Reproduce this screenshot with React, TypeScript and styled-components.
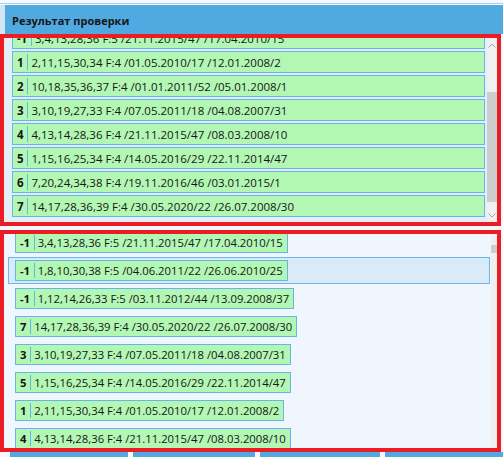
import React from 'react';
import styled, { createGlobalStyle } from 'styled-components';

const GlobalStyle = createGlobalStyle`
  html, body {
    margin: 0;
    padding: 0;
    background: #ffffff;
  }
  body {
    font-family: 'Open Sans', 'Noto Sans', 'Liberation Sans', sans-serif;
  }
`;

const palette = {
  blue: '#50a9e0',
  green: '#b3f7b4',
  border: '#68b3e8',
  red: '#ec1c24',
  text: '#161616',
  track: '#f0f0f0',
  thumb: '#cdcdcd',
  arrow: '#a3a3a3'
};

type Entry = { num: string; text: string };

const upperRows: Entry[] = [
  { num: '-1', text: '3,4,13,28,36 F:5 /21.11.2015/47 /17.04.2010/15' },
  { num: '1', text: '2,11,15,30,34 F:4 /01.05.2010/17 /12.01.2008/2' },
  { num: '2', text: '10,18,35,36,37 F:4 /01.01.2011/52 /05.01.2008/1' },
  { num: '3', text: '3,10,19,27,33 F:4 /07.05.2011/18 /04.08.2007/31' },
  { num: '4', text: '4,13,14,28,36 F:4 /21.11.2015/47 /08.03.2008/10' },
  { num: '5', text: '1,15,16,25,34 F:4 /14.05.2016/29 /22.11.2014/47' },
  { num: '6', text: '7,20,24,34,38 F:4 /19.11.2016/46 /03.01.2015/1' },
  { num: '7', text: '14,17,28,36,39 F:4 /30.05.2020/22 /26.07.2008/30' }
];

const lowerRows: Entry[] = [
  { num: '-1', text: '3,4,13,28,36 F:5 /21.11.2015/47 /17.04.2010/15' },
  { num: '-1', text: '1,8,10,30,38 F:5 /04.06.2011/22 /26.06.2010/25' },
  { num: '-1', text: '1,12,14,26,33 F:5 /03.11.2012/44 /13.09.2008/37' },
  { num: '7', text: '14,17,28,36,39 F:4 /30.05.2020/22 /26.07.2008/30' },
  { num: '3', text: '3,10,19,27,33 F:4 /07.05.2011/18 /04.08.2007/31' },
  { num: '5', text: '1,15,16,25,34 F:4 /14.05.2016/29 /22.11.2014/47' },
  { num: '1', text: '2,11,15,30,34 F:4 /01.05.2010/17 /12.01.2008/2' },
  { num: '4', text: '4,13,14,28,36 F:4 /21.11.2015/47 /08.03.2008/10' }
];

const tabs = [118, 122, 120, 118];

const Window = styled.div`
  width: 503px;
  height: 457px;
  display: flex;
  flex-direction: column;
  background: #f4f8fc;
  overflow: hidden;
`;

const TopStrip = styled.div`
  height: 1px;
  border-top: 3px solid #f7fafd;
  border-bottom: 1px solid #ffffff;
  background: #a8d0ee;
`;

const HeaderRow = styled.div`
  display: flex;
  height: 29px;
`;

const SideEdge = styled.div`
  width: 5px;
  background: #d3e5f5;
`;

const Header = styled.div`
  flex: 1;
  display: flex;
  align-items: center;
  padding: 2px 0 0 7px;
  background: ${palette.blue};
  color: ${palette.text};
  font-size: 11px;
  font-weight: 700;
`;

const Panel = styled.section<{ $height: number }>`
  box-sizing: border-box;
  width: 501px;
  height: ${(p) => p.$height}px;
  border: 4px solid ${palette.red};
  display: flex;
  overflow: hidden;
`;

const PanelGap = styled.div`
  height: 4px;
`;

const Viewport = styled.div<{ $bg: string; $padLeft: number; $padRight: number }>`
  flex: 1;
  overflow: hidden;
  background: ${(p) => p.$bg};
  padding: 0 ${(p) => p.$padRight}px 0 ${(p) => p.$padLeft}px;
`;

const RowList = styled.div<{ $offset: number }>`
  display: flex;
  flex-direction: column;
  margin-top: ${(p) => p.$offset}px;
`;

const Row = styled.div`
  box-sizing: border-box;
  height: 22px;
  margin-bottom: 2px;
  display: flex;
  align-items: center;
  padding-left: 4px;
  background: ${palette.green};
  border: 1px solid ${palette.border};
  font-size: 11.5px;
  color: ${palette.text};
  white-space: nowrap;
`;

const ItemSlot = styled.div<{ $selected?: boolean }>`
  box-sizing: border-box;
  height: 27px;
  margin-bottom: 1px;
  padding: 2px 0 2px 6px;
  display: flex;
  align-items: center;
  border: 1px solid ${(p) => (p.$selected ? '#6db6e8' : 'transparent')};
  background: ${(p) => (p.$selected ? '#d9ebf9' : 'transparent')};
`;

const Item = styled.div`
  box-sizing: border-box;
  height: 21px;
  display: flex;
  align-items: center;
  padding: 0 4px;
  background: ${palette.green};
  border: 1px solid ${palette.border};
  font-size: 11.3px;
  color: ${palette.text};
  white-space: nowrap;
`;

const Num = styled.span`
  font-weight: 700;
  letter-spacing: -0.2px;
`;

const Separator = styled.span`
  align-self: stretch;
  width: 1px;
  margin: 2px 3px 2px 4px;
  background: ${palette.border};
`;

const ScrollBar = styled.div<{ $width: number }>`
  width: ${(p) => p.$width}px;
  display: flex;
  flex-direction: column;
  align-items: center;
  background: ${palette.track};
`;

const ArrowBox = styled.div`
  height: 14px;
  display: flex;
  align-items: center;
  justify-content: center;
`;

const Track = styled.div`
  flex: 1;
  align-self: stretch;
  display: flex;
  flex-direction: column;
`;

const Thumb = styled.div<{ $top: number; $height: number }>`
  margin-top: ${(p) => p.$top}px;
  height: ${(p) => p.$height}px;
  background: ${palette.thumb};
`;

const BottomBar = styled.div`
  height: 5px;
  display: flex;
  gap: 5px;
  padding-left: 10px;
  background: #f4f8fc;
`;

const Tab = styled.div<{ $width: number }>`
  width: ${(p) => p.$width}px;
  background: ${palette.blue};
`;

const Chevron = ({ up }: { up?: boolean }) => (
  <svg width="8" height="5" viewBox="0 0 8 5">
    <path
      d={up ? 'M0.5 4.5 L4 1 L7.5 4.5' : 'M0.5 0.5 L4 4 L7.5 0.5'}
      fill="none"
      stroke={palette.arrow}
      strokeWidth="1"
    />
  </svg>
);

const App = () => {
  return (
    <>
      <GlobalStyle />
      <Window>
        <TopStrip />
        <HeaderRow>
          <SideEdge />
          <Header>Результат проверки</Header>
        </HeaderRow>

        <Panel $height={192}>
          <Viewport $bg="#e4eef8" $padLeft={8} $padRight={2}>
            <RowList $offset={-11}>
              {upperRows.map((row, idx) => (
                <Row key={idx}>
                  <Num>{row.num}</Num>
                  <Separator />
                  {row.text}
                </Row>
              ))}
            </RowList>
          </Viewport>
          <ScrollBar $width={10}>
            <ArrowBox>
              <Chevron up />
            </ArrowBox>
            <Track>
              <Thumb $top={40} $height={110} />
            </Track>
            <ArrowBox>
              <Chevron />
            </ArrowBox>
          </ScrollBar>
        </Panel>

        <PanelGap />

        <Panel $height={222}>
          <Viewport $bg="#eff6fe" $padLeft={4} $padRight={1}>
            <RowList $offset={-5}>
              {lowerRows.map((row, idx) => (
                <ItemSlot key={idx} $selected={idx === 1}>
                  <Item>
                    <Num>{row.num}</Num>
                    <Separator />
                    {row.text}
                  </Item>
                </ItemSlot>
              ))}
            </RowList>
          </Viewport>
          <ScrollBar $width={6}>
            <Track>
              <Thumb $top={11} $height={8} />
            </Track>
          </ScrollBar>
        </Panel>

        <BottomBar>
          {tabs.map((w, idx) => (
            <Tab key={idx} $width={w} />
          ))}
        </BottomBar>
      </Window>
    </>
  );
};

export default App;
